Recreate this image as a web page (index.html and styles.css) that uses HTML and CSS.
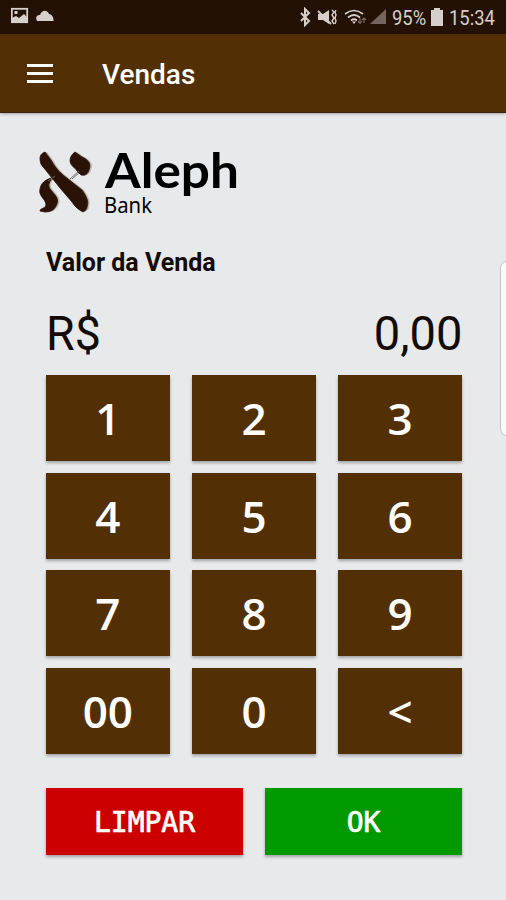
FILE: index.html
```html
<!DOCTYPE html>
<html lang="pt-BR">
<head>
    <meta charset="UTF-8">
    <title>Vendas</title>
    <link rel="stylesheet" href="styles.css">
</head>
<body>
    <div class="status-bar">
        <svg class="left-icons" width="48" height="20" viewBox="0 0 48 20">
            <rect x="0.8" y="2.8" width="15.4" height="13.4" fill="none" stroke="#d6cfcb" stroke-width="1.8"/>
            <path d="M1 16V12l4-2 3 2 5-4 3 3v5z" fill="#d6cfcb"/>
            <rect x="3.5" y="5" width="3" height="3" fill="#d6cfcb"/>
            <path d="M26 15c-2-4 0-6 3-6C31 3 37 4 38 8c3 0 5 4 4.500 7z" fill="#d6cfcb"/>
        </svg>
        <svg class="right-icons" width="88" height="20" viewBox="0 0 88 20">
            <path d="M1 6l8 8-4 4V2l4 4-8 8" fill="none" stroke="#d6cfcb" stroke-width="2"/>
            <path d="M18 7h5l6-4v14l-6-4h-5z" fill="#d6cfcb"/>
            <path d="M18 4l13 13" stroke="#d6cfcb" stroke-width="1.800"/>
            <path d="M32 3l2 2-2 3 2 3-2 3 2 3M36 3l-1 2 1 3-1 3 1 3-1 3" fill="none" stroke="#d6cfcb" stroke-width="1.400"/>
            <path d="M45 7q9-7 18 0M48 10.500q6-5 12 0M51 13.500q3-2.500 6 0" fill="none" stroke="#d6cfcb" stroke-width="1.700"/>
            <path d="M52 14.500h4l-2 2.500z" fill="#d6cfcb"/>
            <path d="M60 11v5M58 14l2 2.500 2-2.500M64 16v-5M62 13l2-2 2 2" fill="none" stroke="#77675e" stroke-width="1.200"/>
            <path d="M70 17L86 2v15z" fill="#75665d"/>
        </svg>
        <span class="percent">95%</span>
        <svg class="battery" width="12" height="18" viewBox="0 0 12 18">
            <path d="M0 2h3V0h6v2h3v16H0z" fill="#d6cfcb"/>
        </svg>
        <span class="clock">15:34</span>
    </div>

    <div class="header">
        <div class="menu">
            <span></span>
            <span></span>
            <span></span>
        </div>
        <h1>Vendas</h1>
    </div>

    <div class="container">
        <svg class="logo" width="212" height="72" viewBox="0 0 212 72">
            <defs>
                <g id="aleph">
                    <path d="M8 3C5 4 3 6 3 9C3 14 4 16 7 19L23 39L35 53C38 58 42 61 46 63C49 61 50 60 50 58C52 53 50 48 45 41L26 26C20 21 17 16 14 11Z"/>
                    <path d="M38 3C35 5 33 8 33 12C34 18 38 18 40 22L44 26C48 27 51 25 52 21C55 14 50 10 45 8Z"/>
                    <path d="M14 29C8 31 4 34 3 40C1 47 9 50 9 56C8 60 3 59 3 62L8 63C15 63 18 60 20 55C23 48 14 43 12 38C11 34 14 32 14 29Z"/>
                    <path d="M42 22L33 30M11 32L18 27" fill="none" stroke="#706761" stroke-width="1"/>
                </g>
            </defs>
            <use href="#aleph" x="2" y="0" fill="#bdb5ae"/>
            <use href="#aleph" fill="#2b1207" stroke="#2b1207" stroke-width="0.8"/>
            <text class="logo-name" x="68" y="39" textLength="134" lengthAdjust="spacingAndGlyphs">Aleph</text>
            <text class="logo-bank" x="67" y="64" textLength="48" lengthAdjust="spacingAndGlyphs">Bank</text>
        </svg>

        <h2>Valor da Venda</h2>
        <div class="amount">
            <span>R$</span>
            <span>0,00</span>
        </div>

        <div class="keypad">
            <button>1</button>
            <button>2</button>
            <button>3</button>
            <button>4</button>
            <button>5</button>
            <button>6</button>
            <button>7</button>
            <button>8</button>
            <button>9</button>
            <button>00</button>
            <button>0</button>
            <button>&lt;</button>
        </div>

        <div class="actions">
            <button class="clear-btn">LIMPAR</button>
            <button class="ok-btn">OK</button>
        </div>
    </div>
    <div class="edge-panel"></div>
</body>
</html>
```
FILE: styles.css
```css
* {
    box-sizing: border-box;
}

body {
    margin: 0;
    height: 900px;
    position: relative;
    overflow: hidden;
    background: #e7e9ea;
    color: #140b08;
    font-family: Roboto, sans-serif;
}

.status-bar {
    display: flex;
    align-items: center;
    height: 34px;
    padding: 0 11px;
    background: #241106;
    color: #d6cfcb;
    font-size: 20px;
}

.left-icons {
    margin-top: -2px;
}

.right-icons {
    margin-left: auto;
}

.percent {
    width: 35px;
    margin-top: 2px;
    margin-left: 4px;
    transform: scaleX(0.92);
    transform-origin: left;
}

.battery {
    margin-left: 4px;
}

.clock {
    width: 46px;
    margin-top: 2px;
    margin-left: 6px;
    transform: scaleX(0.92);
    transform-origin: left;
}

.header {
    display: flex;
    align-items: center;
    height: 79px;
    padding-left: 27px;
    background: #532f05;
    border-bottom: 1px solid #40200a;
    box-shadow: 0 1px 3px rgba(0,0,0,0.3);
}

.menu {
    display: grid;
    gap: 5px;
    width: 26px;
}

.menu span {
    height: 3px;
    background: white;
}

.header h1 {
    margin: 2px 0 0 49px;
    color: white;
    font-size: 28px;
    font-weight: 500;
}

.container {
    padding: 36px 44px 0 46px;
}

.logo {
    display: block;
    margin-left: -9px;
    overflow: visible;
}

.logo-name {
    font-family: Lato, sans-serif;
    font-size: 47px;
    font-weight: 700;
}

.logo-bank {
    font-family: "Noto Sans", sans-serif;
    font-size: 22px;
}

h2 {
    margin: 26px 0 0;
    font-size: 25px;
    line-height: 32px;
    font-weight: 700;
}

.amount {
    display: flex;
    justify-content: space-between;
    height: 96px;
    padding-top: 27px;
    font-size: 48px;
    line-height: 56px;
}

.amount span:first-child {
    transform: scaleX(0.97);
    transform-origin: left;
}

.amount span:last-child {
    transform: scaleX(0.98);
    transform-origin: right;
}

.keypad {
    display: grid;
    grid-template-columns: repeat(3, 1fr);
    grid-auto-rows: 86px;
    gap: 11.7px 22.5px;
}

button {
    border: none;
    padding: 0;
    color: white;
    cursor: pointer;
    box-shadow: 0 2px 3px rgba(0,0,0,0.3);
}

.keypad button {
    background: #532f05;
    font-family: "Open Sans", sans-serif;
    font-size: 44px;
    font-weight: 600;
}

.actions {
    display: grid;
    grid-template-columns: 1fr 1fr;
    grid-auto-rows: 67px;
    gap: 22px;
    margin-top: 34px;
}

.actions button {
    padding-top: 2px;
    font-family: "DejaVu Sans Mono", monospace;
    font-size: 28px;
    -webkit-text-stroke: 0.7px white;
}

.actions .clear-btn {
    background: #cc0000;
}

.actions .ok-btn {
    background: #009a00;
}

.edge-panel {
    position: absolute;
    top: 261px;
    right: -8px;
    width: 14px;
    height: 175px;
    border: 1px solid #c2c4c5;
    border-radius: 7px;
    background: #fafafa;
}
```
